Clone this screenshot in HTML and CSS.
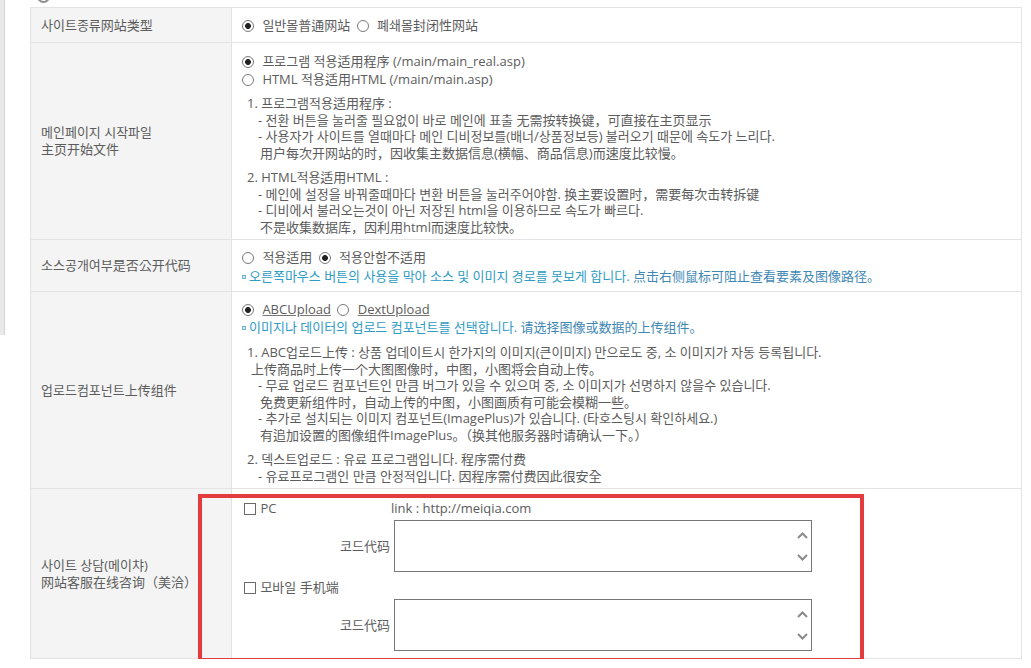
FILE: index.html
```html
<!DOCTYPE html>
<html lang="ko">
<head>
  <meta charset="UTF-8">
  <title>사이트 기본설정</title>
  <link rel="stylesheet" href="styles.css">
</head>
<body>
<div class="side"></div>

<div class="main">
  <span class="top-icon"></span>

  <table class="form">
    <colgroup>
      <col class="col-label">
      <col>
    </colgroup>
    <tr class="row-kind">
      <th>사이트종류网站类型</th>
      <td>
        <label class="opt"><input type="radio" name="kind" checked> 일반몰普通网站</label>
        <label class="opt"><input type="radio" name="kind"> 폐쇄몰封闭性网站</label>
      </td>
    </tr>

    <tr class="row-main">
      <th>메인페이지 시작파일<br>主页开始文件</th>
      <td>
        <label class="opt-line"><input type="radio" name="main" checked> 프로그램 적용适用程序 (/main/main_real.asp)</label>
        <label class="opt-line"><input type="radio" name="main"> HTML 적용适用HTML (/main/main.asp)</label>
        <div class="notes">
          <div class="n-head">1. 프로그램적용适用程序 :</div>
          <div class="n-item">- 전환 버튼을 눌러줄 필요없이 바로 메인에 표출 无需按转换键，可直接在主页显示</div>
          <div class="n-item">- 사용자가 사이트를 열때마다 메인 디비정보를(배너/상품정보등) 불러오기 때문에 속도가 느리다.</div>
          <div class="n-cn">用户每次开网站的时，因收集主数据信息(横幅、商品信息)而速度比较慢。</div>
        </div>
        <div class="notes">
          <div class="n-head">2. HTML적용适用HTML :</div>
          <div class="n-item">- 메인에 설정을 바꿔줄때마다 변환 버튼을 눌러주어야함. 换主要设置时，需要每次击转拆键</div>
          <div class="n-item">- 디비에서 불러오는것이 아닌 저장된 html을 이용하므로 속도가 빠르다.</div>
          <div class="n-cn">不是收集数据库，因利用html而速度比较快。</div>
        </div>
      </td>
    </tr>

    <tr class="row-source">
      <th>소스공개여부是否公开代码</th>
      <td>
        <label class="opt-line"><input type="radio" name="source"> 적용适用 <input type="radio" name="source" class="next" checked> 적용안함不适用</label>
        <div class="tip"><span class="dot"></span>오른쪽마우스 버튼의 사용을 막아 소스 및 이미지 경로를 못보게 합니다. <span class="tip-cn">点击右侧鼠标可阻止查看要素及图像路径。</span></div>
      </td>
    </tr>

    <tr class="row-upload">
      <th>업로드컴포넌트上传组件</th>
      <td>
        <label class="opt-line"><input type="radio" name="upload" checked> <u>ABCUpload</u> <input type="radio" name="upload" class="next"> <u>DextUpload</u></label>
        <div class="tip"><span class="dot"></span>이미지나 데이터의 업로드 컴포넌트를 선택합니다. <span class="tip-cn">请选择图像或数据的上传组件。</span></div>
        <div class="notes">
          <div class="n-head">1. ABC업로드上传 : 상품 업데이트시 한가지의 이미지(큰이미지) 만으로도 중, 소 이미지가 자동 등록됩니다.</div>
          <div class="n-sub">上传商品时上传一个大图图像时，中图，小图将会自动上传。</div>
          <div class="n-item">- 무료 업로드 컴포넌트인 만큼 버그가 있을 수 있으며 중, 소 이미지가 선명하지 않을수 있습니다.</div>
          <div class="n-cn">免费更新组件时，自动上传的中图，小图画质有可能会模糊一些。</div>
          <div class="n-item">- 추가로 설치되는 이미지 컴포넌트(ImagePlus)가 있습니다. (타호스팅시 확인하세요.)</div>
          <div class="n-cn">有追加设置的图像组件ImagePlus。（换其他服务器时请确认一下。）</div>
        </div>
        <div class="notes">
          <div class="n-head">2. 덱스트업로드 : 유료 프로그램입니다. 程序需付费</div>
          <div class="n-item">- 유료프로그램인 만큼 안정적입니다. 因程序需付费因此很安全</div>
        </div>
      </td>
    </tr>

    <tr class="row-chat">
      <th>사이트 상담(메이챠)<br>网站客服在线咨询（美洽）</th>
      <td>
        <div class="chat">
          <label class="chk"><input type="checkbox"> PC</label>
          <span class="link">link : http://meiqia.com</span>

          <span class="code-label">코드代码</span>
          <div class="code-box">
            <textarea></textarea>
            <svg class="arrows" width="11" height="32" viewBox="0 0 11 32"><polyline points="1,7 5.5,2.5 10,7"/><polyline points="1,24 5.5,28.5 10,24"/></svg>
          </div>

          <label class="chk"><input type="checkbox"> 모바일 手机端</label>
          <span></span>

          <span class="code-label">코드代码</span>
          <div class="code-box">
            <textarea></textarea>
            <svg class="arrows" width="11" height="32" viewBox="0 0 11 32"><polyline points="1,7 5.5,2.5 10,7"/><polyline points="1,24 5.5,28.5 10,24"/></svg>
          </div>
        </div>
      </td>
    </tr>
  </table>

  <div class="mark"></div>
</div>
</body>
</html>
```

FILE: styles.css
```css
* { box-sizing: border-box; }
body {
  margin: 0;
  font-family: "Open Sans", "Noto Sans CJK KR", sans-serif;
  font-size: 13px;
  color: #5c5c5c;
  background: #fff;
  display: flex;
  align-items: flex-start;
}
.side {
  flex: none;
  width: 5px;
  height: 335px;
  background: #e9e9e9;
  border-right: 1px solid #d4d4d4;
}
.main {
  position: relative;
  margin-left: 25px;
  padding-top: 7px;
}
.top-icon {
  position: absolute;
  left: 7px;
  top: -10px;
  width: 13px;
  height: 13px;
  border-radius: 50%;
  border: 2px solid #8c8c8c;
}

/* form table */
.form {
  width: 992px;
  border-collapse: collapse;
  table-layout: fixed;
}
.col-label { width: 201px; }
.form th, .form td {
  border: 1px solid #e3e3e3;
}
.form th {
  background: #f4f4f4;
  text-align: left;
  font-weight: normal;
  padding: 0 10px;
  line-height: 17px;
  vertical-align: middle;
}
.form td {
  padding: 0 10px;
  vertical-align: top;
}

input[type=radio] {
  appearance: none;
  width: 12px;
  height: 12px;
  margin: 0 5px 0 0;
  border: 1px solid #7a7a7a;
  border-radius: 50%;
  background: #fff;
  vertical-align: -2px;
}
input[type=radio]:checked {
  background: radial-gradient(circle, #222 0 2.6px, #fff 3.2px);
}
input[type=radio].next { margin-left: 3px; }
input[type=checkbox] {
  appearance: none;
  width: 12px;
  height: 12px;
  margin: 0 1px 0 2px;
  border: 1px solid #6a6a6a;
  background: #fff;
  vertical-align: -2px;
}
u { text-decoration-color: #777; }

.opt { line-height: 20px; }
.opt + .opt input { margin-left: 3px; }
.opt-line { display: block; line-height: 18px; }

.notes { margin-top: 7px; line-height: 16.5px; }
.notes + .notes { margin-top: 8px; }
.n-head { padding-left: 5px; }
.n-sub { padding-left: 9px; }
.n-item { padding-left: 16px; }
.n-cn { padding-left: 18px; }

.tip {
  color: #2f9cc4;
  line-height: 18px;
}
.tip-cn { color: #3f88b4; }
.dot {
  display: inline-block;
  width: 4px;
  height: 4px;
  margin: 0 3px 0 0;
  border: 1px solid #6fb4d3;
  background: #d4ecf5;
  vertical-align: 2px;
}

/* rows */
.row-kind td { padding-top: 7px; padding-bottom: 7px; }
.row-main td { padding-top: 9px; padding-bottom: 4px; }
.row-source td { padding-top: 7px; padding-bottom: 6px; }
.row-source .opt-line { line-height: 20px; }
.row-upload td { padding-top: 8px; padding-bottom: 4px; }
.row-upload .notes { margin-top: 8px; }
.row-upload .notes + .notes { margin-top: 8px; }
.row-chat td { padding-top: 10px; padding-bottom: 7px; }

/* online chat block */
.chat {
  display: grid;
  grid-template-columns: 149px 1fr;
  grid-template-rows: 18px 55px 24px 55px;
}
.chk { line-height: 18px; align-self: end; }
.link { line-height: 18px; }
.code-label {
  align-self: end;
  line-height: 52px;
  text-align: right;
  padding-right: 1px;
}
.code-box {
  position: relative;
  align-self: end;
  width: 418px;
  height: 52px;
  margin-left: 3px;
}
.code-box textarea {
  display: block;
  width: 100%;
  height: 100%;
  border: 1px solid #777;
  resize: none;
  margin: 0;
  font: inherit;
}
.arrows {
  position: absolute;
  right: 4px;
  top: 11px;
  fill: none;
  stroke: #8a8a8a;
  stroke-width: 2;
}

/* highlight frame drawn over the screenshot */
.mark {
  position: absolute;
  left: 168px;
  top: 494px;
  width: 666px;
  height: 168px;
  border: 4px solid #e33b3e;
}
```
